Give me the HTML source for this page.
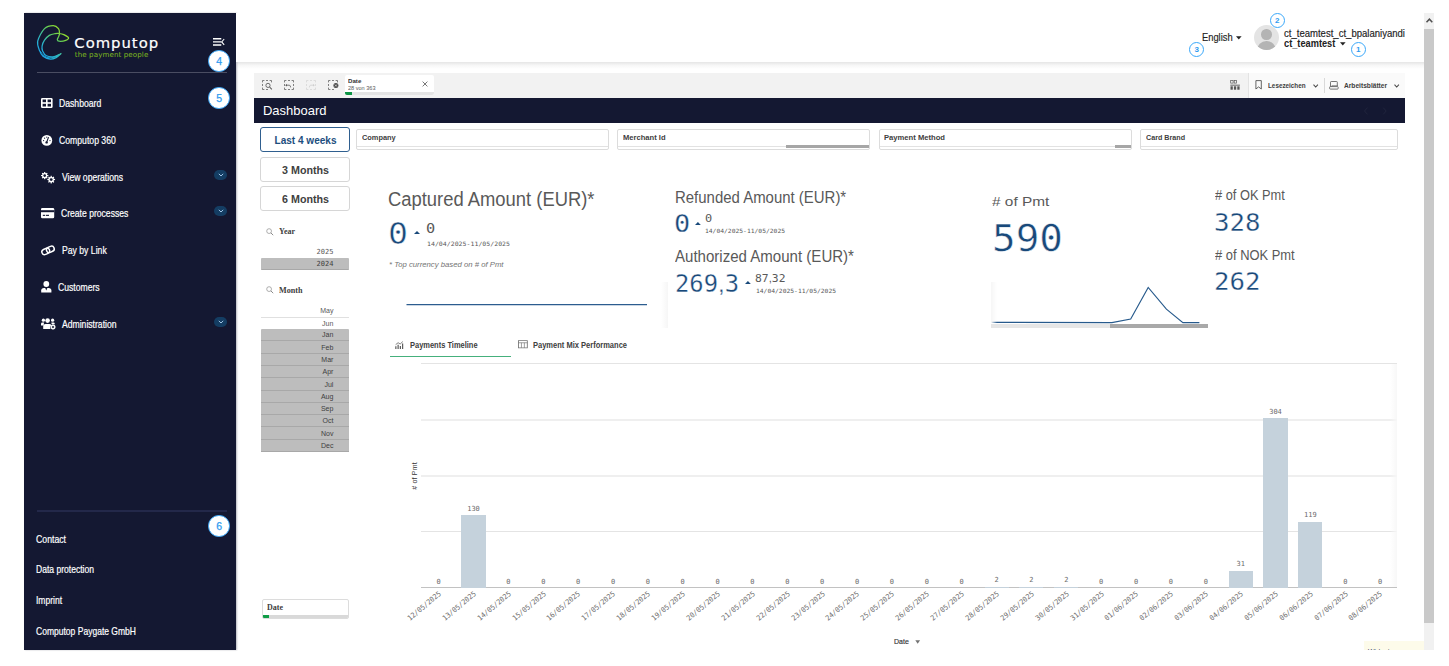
<!DOCTYPE html>
<html lang="en"><head><meta charset="utf-8"><title>Computop Dashboard</title>
<style>
*{box-sizing:border-box;margin:0;padding:0}
html,body{width:1449px;height:666px;overflow:hidden;background:#fff}
body{position:relative;font-family:"Liberation Sans",sans-serif;color:#333}
.abs{position:absolute}
svg{position:absolute;overflow:visible}
#side{position:absolute;left:24px;top:13px;width:212px;height:637px;background:#141832;box-shadow:1px 0 1.5px rgba(20,24,50,.3)}
.badge{position:absolute;border-radius:50%;background:#fff;border:1.1px solid #3aa8fa;color:#2f9bf0;text-align:center;font-family:"Liberation Sans",sans-serif}
.chev{position:absolute;left:213px;width:13px;height:10px;border-radius:5px;background:#143d63}
#hdr{position:absolute;left:236px;top:13px;width:1188px;height:49px;background:#fff}
#hsh{position:absolute;left:237px;top:62px;width:1187px;height:7px;background:linear-gradient(180deg,rgba(0,0,0,.10),rgba(0,0,0,.035) 45%,rgba(0,0,0,0))}
#sb{position:absolute;left:1424px;top:13px;width:10px;height:637px;background:#f1f1f1}
#sb .th{position:absolute;left:0;top:16px;width:10px;height:594px;background:#c9c9c9}
#tb{position:absolute;left:254px;top:73px;width:1151px;height:25px;background:#f2f2f2}
#ttl{position:absolute;left:254px;top:98px;width:1151px;height:25px;background:#141832}
.btn{position:absolute;left:260px;width:90px;height:24.5px;border:1px solid #d4d4d4;border-radius:3px;background:#fff}
.fbox{position:absolute;top:129px;height:20.5px;border:1px solid #dcdcdc;border-radius:2px;background:#fff}
.mono{font-family:"DejaVu Sans Mono","Liberation Mono",monospace}
.serif{font-family:"Liberation Serif",serif}
</style></head><body>

<div id="side"></div>
<div class="abs" style="left:36.5px;top:72px;width:190px;height:1px;background:#4a4d62"></div>
<span id="t1" style="position:absolute;display:inline-block;left:59.3px;top:96.10px;height:14px;line-height:14px;font-size:10.5px;white-space:nowrap;transform:scaleX(0.8234);transform-origin:left center;color:#fff;-webkit-text-stroke:0.2px #fff;">Dashboard</span>
<span id="t2" style="position:absolute;display:inline-block;left:59.3px;top:133.10px;height:14px;line-height:14px;font-size:10.5px;white-space:nowrap;transform:scaleX(0.8245);transform-origin:left center;color:#fff;-webkit-text-stroke:0.2px #fff;">Computop 360</span>
<span id="t3" style="position:absolute;display:inline-block;left:62.2px;top:170.30px;height:14px;line-height:14px;font-size:10.5px;white-space:nowrap;transform:scaleX(0.8184);transform-origin:left center;color:#fff;-webkit-text-stroke:0.2px #fff;">View operations</span>
<span id="t4" style="position:absolute;display:inline-block;left:61px;top:205.80px;height:14px;line-height:14px;font-size:10.5px;white-space:nowrap;transform:scaleX(0.8178);transform-origin:left center;color:#fff;-webkit-text-stroke:0.2px #fff;">Create processes</span>
<span id="t5" style="position:absolute;display:inline-block;left:62.2px;top:243.00px;height:14px;line-height:14px;font-size:10.5px;white-space:nowrap;transform:scaleX(0.8235);transform-origin:left center;color:#fff;-webkit-text-stroke:0.2px #fff;">Pay by Link</span>
<span id="t6" style="position:absolute;display:inline-block;left:58.1px;top:280.00px;height:14px;line-height:14px;font-size:10.5px;white-space:nowrap;transform:scaleX(0.8195);transform-origin:left center;color:#fff;-webkit-text-stroke:0.2px #fff;">Customers</span>
<span id="t7" style="position:absolute;display:inline-block;left:62.2px;top:317.00px;height:14px;line-height:14px;font-size:10.5px;white-space:nowrap;transform:scaleX(0.8192);transform-origin:left center;color:#fff;-webkit-text-stroke:0.2px #fff;">Administration</span>
<div class="chev" style="left:214px;top:169.7px"></div>
<svg style="left:217.5px;top:172.7px" width="6" height="4" viewBox="0 0 6 4"><path d="M0.8 0.8 L3 3 L5.2 0.8" fill="none" stroke="#9fc4e6" stroke-width="1"/></svg>
<div class="chev" style="left:214px;top:206.2px"></div>
<svg style="left:217.5px;top:209.2px" width="6" height="4" viewBox="0 0 6 4"><path d="M0.8 0.8 L3 3 L5.2 0.8" fill="none" stroke="#9fc4e6" stroke-width="1"/></svg>
<div class="chev" style="left:214px;top:317.2px"></div>
<svg style="left:217.5px;top:320.2px" width="6" height="4" viewBox="0 0 6 4"><path d="M0.8 0.8 L3 3 L5.2 0.8" fill="none" stroke="#9fc4e6" stroke-width="1"/></svg>
<div class="abs" style="left:36.5px;top:510px;width:190px;height:2px;background:#23284a"></div>
<span id="t8" style="position:absolute;display:inline-block;left:35.9px;top:531.50px;height:14px;line-height:14px;font-size:10.5px;white-space:nowrap;transform:scaleX(0.8290);transform-origin:left center;color:#fff;-webkit-text-stroke:0.2px #fff;">Contact</span>
<span id="t9" style="position:absolute;display:inline-block;left:35.9px;top:561.50px;height:14px;line-height:14px;font-size:10.5px;white-space:nowrap;transform:scaleX(0.8144);transform-origin:left center;color:#fff;-webkit-text-stroke:0.2px #fff;">Data protection</span>
<span id="t10" style="position:absolute;display:inline-block;left:35.9px;top:592.50px;height:14px;line-height:14px;font-size:10.5px;white-space:nowrap;transform:scaleX(0.8101);transform-origin:left center;color:#fff;-webkit-text-stroke:0.2px #fff;">Imprint</span>
<span id="t11" style="position:absolute;display:inline-block;left:35.9px;top:623.50px;height:14px;line-height:14px;font-size:10.5px;white-space:nowrap;transform:scaleX(0.8120);transform-origin:left center;color:#fff;-webkit-text-stroke:0.2px #fff;">Computop Paygate GmbH</span>
<div class="badge" style="left:208.4px;top:50.2px;width:21.4px;height:21.4px;line-height:21.6px;font-size:10.5px;-webkit-text-stroke:0.25px #2f9bf0">4</div>
<div class="badge" style="left:208.4px;top:87.3px;width:21.4px;height:21.4px;line-height:21.6px;font-size:10.5px;-webkit-text-stroke:0.25px #2f9bf0">5</div>
<div class="badge" style="left:208.4px;top:515.3px;width:21.4px;height:21.4px;line-height:21.6px;font-size:10.5px;-webkit-text-stroke:0.25px #2f9bf0">6</div>
<svg style="left:36px;top:24px" width="34" height="36" viewBox="0 0 34 36">
<defs><linearGradient id="lg" gradientUnits="userSpaceOnUse" x1="4" y1="33" x2="30" y2="7"><stop offset="0" stop-color="#16a0ee"/><stop offset="0.35" stop-color="#2db6c6"/><stop offset="0.7" stop-color="#62cc55"/><stop offset="1" stop-color="#a2e222"/></linearGradient></defs>
<path d="M24.90 29.70 C24.10 30.35 21.87 32.70 20.10 33.60 C18.33 34.50 16.48 35.33 14.30 35.10 C12.12 34.87 8.77 33.57 7.00 32.20 C5.23 30.83 4.58 29.40 3.70 26.90 C2.82 24.40 0.90 20.92 1.70 17.20 C2.50 13.48 5.92 7.22 8.50 4.60 C11.08 1.98 14.87 1.50 17.20 1.50 C19.53 1.50 21.45 3.27 22.50 4.60 C23.55 5.93 23.48 8.17 23.50 9.50 C23.52 10.83 22.97 11.58 22.60 12.60 C22.23 13.62 21.23 14.83 21.30 15.60 C21.37 16.37 21.60 17.07 23.00 17.20 C24.40 17.33 28.12 16.97 29.70 16.40 C31.28 15.83 32.82 14.77 32.50 13.80 C32.18 12.83 29.30 11.32 27.80 10.60 C26.30 9.88 24.95 9.66 23.50 9.50 C22.05 9.34 20.80 9.33 19.10 9.65 C17.40 9.97 15.07 10.31 13.30 11.40 C11.53 12.49 9.70 14.43 8.50 16.20 C7.30 17.97 6.42 20.22 6.10 22.00 C5.78 23.78 5.88 25.28 6.60 26.90 C7.32 28.52 8.47 30.75 10.40 31.70 C12.33 32.65 15.78 32.93 18.20 32.60 C20.62 32.27 23.78 30.18 24.90 29.70" fill="none" stroke="url(#lg)" stroke-width="1.25" stroke-linejoin="round" stroke-linecap="round"/>
<path d="M4.60 27.50 C5.17 28.22 6.60 30.75 8.00 31.80 C9.40 32.85 11.17 33.62 13.00 33.80 C14.83 33.98 17.02 33.58 19.00 32.90 C20.98 32.22 23.92 30.23 24.90 29.70" fill="none" stroke="url(#lg)" stroke-width="0.9" stroke-linecap="round"/>
</svg>
<span id="logo1" style="position:absolute;left:74.3px;top:32.9px;font-family:'DejaVu Sans','Liberation Sans',sans-serif;font-size:14.8px;line-height:20px;color:#fff;white-space:nowrap;letter-spacing:1px;-webkit-text-stroke:0.2px #fff">Computop</span>
<span id="logo2" style="position:absolute;left:74.8px;top:50.1px;font-family:'DejaVu Sans','Liberation Sans',sans-serif;font-size:7.1px;line-height:10px;color:#7fba1f;white-space:nowrap;letter-spacing:0.1px">the payment people</span>
<svg style="left:213px;top:38px" width="12" height="8" viewBox="0 0 12 8"><path d="M0 0.8 H8.3 M0 3.9 H8.3 M0 7 H8.3" stroke="#fff" stroke-width="1.4"/><path d="M11.2 1 L8.7 3.9 L11.2 6.8" fill="none" stroke="#fff" stroke-width="1.1"/></svg>
<svg style="left:41px;top:98px" width="12" height="10" viewBox="0 0 12 10"><rect x="0" y="0" width="11.6" height="10" rx="1.3" fill="#fff"/><rect x="1.6" y="1.5" width="3.4" height="2.7" fill="#141832"/><rect x="6.6" y="1.5" width="3.4" height="2.7" fill="#141832"/><rect x="1.6" y="5.8" width="3.4" height="2.7" fill="#141832"/><rect x="6.6" y="5.8" width="3.4" height="2.7" fill="#141832"/></svg>
<svg style="left:41px;top:135px" width="12" height="11" viewBox="0 0 12 11"><circle cx="5.8" cy="5.4" r="5.4" fill="#fff"/><path d="M5.6 7.4 L7.4 2.6" stroke="#141832" stroke-width="1.1" stroke-linecap="round"/><circle cx="5.6" cy="7.4" r="1.2" fill="#141832"/><circle cx="2.6" cy="5.6" r="0.6" fill="#141832"/><circle cx="3.6" cy="3.2" r="0.6" fill="#141832"/><circle cx="9" cy="5.6" r="0.6" fill="#141832"/><circle cx="5.8" cy="2.2" r="0.6" fill="#141832"/></svg>
<svg style="left:41px;top:171.5px" width="15" height="12" viewBox="0 0 15 12"><path d="M7.37 3.12 L7.37 4.08 L6.27 4.29 L6.01 4.93 L6.63 5.86 L5.96 6.53 L5.03 5.91 L4.39 6.17 L4.18 7.27 L3.22 7.27 L3.01 6.17 L2.37 5.91 L1.44 6.53 L0.77 5.86 L1.39 4.93 L1.13 4.29 L0.03 4.08 L0.03 3.12 L1.13 2.91 L1.39 2.27 L0.77 1.34 L1.44 0.67 L2.37 1.29 L3.01 1.03 L3.22 -0.07 L4.18 -0.07 L4.39 1.03 L5.03 1.29 L5.96 0.67 L6.63 1.34 L6.01 2.27 L6.27 2.91 Z" fill="#fff"/><circle cx="3.7" cy="3.6" r="1.3" fill="#141832"/><path d="M14.07 7.09 L14.07 8.11 L12.91 8.33 L12.63 9.00 L13.29 9.98 L12.58 10.69 L11.60 10.03 L10.93 10.31 L10.71 11.47 L9.69 11.47 L9.47 10.31 L8.80 10.03 L7.82 10.69 L7.11 9.98 L7.77 9.00 L7.49 8.33 L6.33 8.11 L6.33 7.09 L7.49 6.87 L7.77 6.20 L7.11 5.22 L7.82 4.51 L8.80 5.17 L9.47 4.89 L9.69 3.73 L10.71 3.73 L10.93 4.89 L11.60 5.17 L12.58 4.51 L13.29 5.22 L12.63 6.20 L12.91 6.87 Z" fill="#fff"/><circle cx="10.2" cy="7.6" r="1.4" fill="#141832"/></svg>
<svg style="left:40.8px;top:208px" width="14" height="11" viewBox="0 0 14 11"><rect x="0" y="0" width="13.2" height="10.2" rx="1.3" fill="#fff"/><rect x="0" y="2.2" width="13.2" height="2" fill="#141832"/><rect x="1.8" y="6.8" width="2.2" height="1.1" fill="#141832"/><rect x="4.8" y="6.8" width="3.2" height="1.1" fill="#141832"/></svg>
<svg style="left:41px;top:244.5px" width="15" height="11" viewBox="0 0 15 11"><g fill="none" stroke="#fff" stroke-width="1.5" transform="rotate(-24 7 5.5)"><rect x="0.6" y="2.7" width="8" height="5.4" rx="2.7"/><rect x="5.6" y="2.7" width="8" height="5.4" rx="2.7"/></g></svg>
<svg style="left:40.6px;top:281.2px" width="11" height="12" viewBox="0 0 11 12"><circle cx="5.3" cy="3" r="2.9" fill="#fff"/><path d="M0.2 11.4 V9.6 Q0.2 6.9 3 6.9 H7.6 Q10.4 6.9 10.4 9.6 V11.4 Z" fill="#fff"/><path d="M4.2 6.9 L5.3 9.6 L6.4 6.9" fill="#141832"/></svg>
<svg style="left:40.6px;top:317.6px" width="15" height="12" viewBox="0 0 15 12"><circle cx="2.4" cy="2.2" r="1.6" fill="#fff"/><circle cx="6.6" cy="2.6" r="2.3" fill="#fff"/><circle cx="11.6" cy="2.2" r="1.6" fill="#fff"/><path d="M0 7.6 V6 Q0 4.6 1.4 4.6 H3.2 Q2.6 5.6 2.8 7.6 Z" fill="#fff"/><path d="M2.2 11 V8.6 Q2.2 6 4.6 6 H8.4 Q10 6 10.2 7.2 L9 9 L9.4 11 Z" fill="#fff"/><path d="M10.4 4.6 H12.4 Q13.8 4.6 13.8 6 V6.2 H10.6 Z" fill="#fff"/><path d="M14.88 8.62 L14.88 9.38 L14.02 9.54 L13.81 10.04 L14.30 10.77 L13.77 11.30 L13.04 10.81 L12.54 11.02 L12.38 11.88 L11.62 11.88 L11.46 11.02 L10.96 10.81 L10.23 11.30 L9.70 10.77 L10.19 10.04 L9.98 9.54 L9.12 9.38 L9.12 8.62 L9.98 8.46 L10.19 7.96 L9.70 7.23 L10.23 6.70 L10.96 7.19 L11.46 6.98 L11.62 6.12 L12.38 6.12 L12.54 6.98 L13.04 7.19 L13.77 6.70 L14.30 7.23 L13.81 7.96 L14.02 8.46 Z" fill="#fff"/><circle cx="12" cy="9" r="1" fill="#141832"/></svg>
<div id="hdr"></div><div id="hsh"></div>
<div id="sb"><div class="th"></div></div>
<div id="tb"></div>
<div id="ttl"></div>
<span id="t12" style="position:absolute;display:inline-block;left:263.4px;top:102.00px;height:17px;line-height:17px;font-size:13px;white-space:nowrap;transform:scaleX(0.9983);transform-origin:left center;color:#fff;">Dashboard</span>
<span id="t13" style="position:absolute;display:inline-block;left:1201.7px;top:31.20px;height:13px;line-height:13px;font-size:10px;white-space:nowrap;transform:scaleX(0.9326);transform-origin:left center;color:#222;-webkit-text-stroke:0.15px #222;">English</span>
<span id="t14" style="position:absolute;display:inline-block;left:1284.3px;top:26.50px;height:13px;line-height:13px;font-size:10px;white-space:nowrap;transform:scaleX(0.9546);transform-origin:left center;color:#222;-webkit-text-stroke:0.15px #222;">ct_teamtest_ct_bpalaniyandi</span>
<span id="t15" style="position:absolute;display:inline-block;left:1284.3px;top:36.80px;height:13px;line-height:13px;font-size:10px;white-space:nowrap;transform:scaleX(0.9228);transform-origin:left center;color:#222;font-weight:bold;">ct_teamtest</span>
<div class="abs" style="left:1254px;top:25.3px;width:24.8px;height:24.8px;border-radius:50%;background:#e4e4e4;overflow:hidden"><div class="abs" style="left:7.2px;top:4px;width:10.4px;height:10.4px;border-radius:50%;background:#b4b4b4"></div><div class="abs" style="left:3px;top:15.4px;width:18.8px;height:14px;border-radius:9.4px 9.4px 0 0;background:#b4b4b4"></div></div>
<div class="badge" style="left:1269.8px;top:12.899999999999999px;width:15px;height:15px;line-height:13px;font-size:8px;font-weight:bold">2</div>
<div class="badge" style="left:1350.7px;top:42.3px;width:15px;height:15px;line-height:13px;font-size:8px;font-weight:bold">1</div>
<div class="badge" style="left:1189.2px;top:42.3px;width:15px;height:15px;line-height:13px;font-size:8px;font-weight:bold">3</div>
<svg style="left:1235.7px;top:36.4px" width="6" height="4" viewBox="0 0 6 4"><path d="M0 0.3 H5.6 L2.8 3.4 Z" fill="#222"/></svg>
<svg style="left:1339.6px;top:41.8px" width="6" height="4" viewBox="0 0 6 4"><path d="M0 0.3 H5.6 L2.8 3.4 Z" fill="#222"/></svg>
<svg style="left:1425.6px;top:17.6px" width="7" height="5" viewBox="0 0 7 5"><path d="M0.5 4.2 L3.4 1.2 L6.3 4.2" fill="none" stroke="#505050" stroke-width="1.5"/></svg>
<div class="abs" style="left:1248px;top:73px;width:157px;height:25px;background:#fafafa;border-left:1px solid #e3e3e3"></div>
<svg style="left:262px;top:80px" width="10" height="10" viewBox="0 0 10 10"><path d="M0.5 2.4 V0.5 H2.4 M4 0.5 H6 M7.6 0.5 H9.5 V2.4 M6 9.5 H4 M2.4 9.5 H0.5 V7.6 M0.5 6 V4" fill="none" stroke="#5a5a5a" stroke-width="0.75"/><circle cx="6" cy="5.4" r="2.1" fill="none" stroke="#5a5a5a" stroke-width="0.85"/><path d="M7.6 7 L9.8 9.4" stroke="#5a5a5a" stroke-width="1.1"/></svg>
<svg style="left:284px;top:80px" width="10" height="10" viewBox="0 0 10 10"><path d="M0.5 2.4 V0.5 H2.4 M4 0.5 H6 M7.6 0.5 H9.5 V2.4 M9.5 4 V6 M9.5 7.6 V9.5 H7.6 M6 9.5 H4 M2.4 9.5 H0.5 V7.6 M0.5 6 V4" fill="none" stroke="#5a5a5a" stroke-width="0.75"/><path d="M2 5.2 H5.2 Q6.6 5.2 6.6 7.4" fill="none" stroke="#5a5a5a" stroke-width="0.8"/><path d="M1.2 5.2 L3 3.9 V6.5 Z" fill="#5a5a5a"/></svg>
<svg style="left:306px;top:80px" width="10" height="10" viewBox="0 0 10 10"><path d="M0.5 2.4 V0.5 H2.4 M4 0.5 H6 M7.6 0.5 H9.5 V2.4 M9.5 4 V6 M9.5 7.6 V9.5 H7.6 M6 9.5 H4 M2.4 9.5 H0.5 V7.6 M0.5 6 V4" fill="none" stroke="#d4d4d4" stroke-width="0.75"/><path d="M8 5.2 H4.8 Q3.4 5.2 3.4 7.4" fill="none" stroke="#cfcfcf" stroke-width="0.8"/><path d="M8.8 5.2 L7 3.9 V6.5 Z" fill="#cfcfcf"/></svg>
<svg style="left:328px;top:80px" width="10" height="10" viewBox="0 0 10 10"><path d="M0.5 2.4 V0.5 H2.4 M4 0.5 H6 M7.6 0.5 H9.5 V2.4 M6 9.5 H4 M2.4 9.5 H0.5 V7.6 M0.5 6 V4" fill="none" stroke="#5a5a5a" stroke-width="0.75"/><circle cx="7.9" cy="5.5" r="2.5" fill="#4a4a4a"/><path d="M6.9 4.5 L8.9 6.5 M8.9 4.5 L6.9 6.5" stroke="#f2f2f2" stroke-width="0.7"/></svg>
<div class="abs" style="left:345px;top:75px;width:89.2px;height:20px;background:#fff;border-radius:2px;overflow:hidden"><div class="abs" style="left:0;bottom:0;width:100%;height:3px;background:#e4e4e4"></div><div class="abs" style="left:0;bottom:0;width:7.1px;height:3px;background:#0c9444"></div></div>
<span id="t16" style="position:absolute;display:inline-block;left:347.7px;top:77.20px;height:8px;line-height:8px;font-size:6.2px;white-space:nowrap;transform:scaleX(0.9909);transform-origin:left center;color:#333;font-weight:bold;">Date</span>
<span id="t17" style="position:absolute;display:inline-block;left:347.7px;top:84.40px;height:8px;line-height:8px;font-size:5.8px;white-space:nowrap;transform:scaleX(0.9586);transform-origin:left center;color:#595959;">28 von 363</span>
<svg style="left:422px;top:80.8px" width="6" height="6" viewBox="0 0 6 6"><path d="M0.6 0.6 L5.4 5.4 M5.4 0.6 L0.6 5.4" stroke="#555" stroke-width="0.8"/></svg>
<svg style="left:1230px;top:80px" width="10" height="10" viewBox="0 0 10 10"><rect x="0.7" y="0.5" width="2.4" height="2.6" fill="none" stroke="#555" stroke-width="0.7"/><rect x="4.2" y="0.5" width="2.4" height="2.6" fill="none" stroke="#555" stroke-width="0.7"/><rect x="0.3" y="4.7" width="9.6" height="0.9" fill="#555"/><rect x="0.5" y="6.3" width="2.3" height="3.4" fill="#555"/><rect x="3.9" y="6.3" width="2.3" height="3.4" fill="#555"/><rect x="7.3" y="6.3" width="2.3" height="3.4" fill="#555"/></svg>
<svg style="left:1255px;top:80px" width="8" height="10" viewBox="0 0 8 10"><path d="M0.9 0.6 H6.3 V9 L3.6 6.9 L0.9 9 Z" fill="none" stroke="#555" stroke-width="0.9"/></svg>
<span id="t18" style="position:absolute;display:inline-block;left:1268.4px;top:80.80px;height:9px;line-height:9px;font-size:7px;white-space:nowrap;transform:scaleX(0.9030);transform-origin:left center;color:#404040;font-weight:bold;">Lesezeichen</span>
<svg style="left:1313px;top:83.6px" width="6" height="4" viewBox="0 0 6 4"><path d="M0.5 0.6 L2.7 3 L4.9 0.6" fill="none" stroke="#4a4a4a" stroke-width="1.05"/></svg>
<div class="abs" style="left:1324px;top:78px;width:1px;height:14.5px;background:#d9d9d9"></div>
<svg style="left:1329px;top:81px" width="10" height="9" viewBox="0 0 10 9"><path d="M1.5 5.6 V1.2 Q1.5 0.5 2.2 0.5 H7.6 Q8.3 0.5 8.3 1.2 V5" fill="none" stroke="#555" stroke-width="0.8"/><rect x="0.6" y="5.6" width="8.6" height="2.5" rx="0.8" fill="none" stroke="#555" stroke-width="0.8"/><path d="M2.8 5.6 V4.8 H8.6" fill="none" stroke="#555" stroke-width="0.7"/></svg>
<span id="t19" style="position:absolute;display:inline-block;left:1344.4px;top:80.80px;height:9px;line-height:9px;font-size:7px;white-space:nowrap;transform:scaleX(0.9469);transform-origin:left center;color:#404040;font-weight:bold;">Arbeitsblätter</span>
<svg style="left:1393.8px;top:83.6px" width="6" height="4" viewBox="0 0 6 4"><path d="M0.5 0.6 L2.7 3 L4.9 0.6" fill="none" stroke="#4a4a4a" stroke-width="1.05"/></svg>
<svg style="left:1363px;top:107px" width="26" height="8" viewBox="0 0 26 8"><path d="M4.5 0.6 L1.5 4 L4.5 7.4 M20.2 0.6 L23.2 4 L20.2 7.4" fill="none" stroke="#20243d" stroke-width="1"/></svg>
<div class="btn" style="top:127.3px;border-color:#2f5f8f"></div>
<div style="position:absolute;left:155.2px;width:300px;text-align:center;top:132.70px;height:15px;line-height:15px;font-size:11.2px;white-space:nowrap;color:#1d4e7e;font-weight:bold;"><span id="t20" style="display:inline-block;transform:scaleX(0.8979);transform-origin:center center;">Last 4 weeks</span></div>
<div class="btn" style="top:157.3px;border-color:#d6d6d6"></div>
<div style="position:absolute;left:155.2px;width:300px;text-align:center;top:162.70px;height:15px;line-height:15px;font-size:11.2px;white-space:nowrap;color:#404040;font-weight:bold;"><span id="t21" style="display:inline-block;transform:scaleX(0.9570);transform-origin:center center;">3 Months</span></div>
<div class="btn" style="top:186.4px;border-color:#d6d6d6"></div>
<div style="position:absolute;left:155.2px;width:300px;text-align:center;top:191.80px;height:15px;line-height:15px;font-size:11.2px;white-space:nowrap;color:#404040;font-weight:bold;"><span id="t22" style="display:inline-block;transform:scaleX(0.9570);transform-origin:center center;">6 Months</span></div>
<div class="fbox" style="left:356.4px;width:253.10000000000002px"><div class="abs" style="left:0;right:0;bottom:1.5px;height:1px;background:#e2e2e2"></div></div>
<span id="t23" style="position:absolute;display:inline-block;left:361.7px;top:132.80px;height:10px;line-height:10px;font-size:8px;white-space:nowrap;transform:scaleX(0.9245);transform-origin:left center;color:#404040;font-weight:bold;">Company</span>
<div class="fbox" style="left:617.4px;width:253.0px"><div class="abs" style="left:0;right:0;bottom:1.5px;height:1px;background:#e2e2e2"></div><div class="abs" style="left:167.60000000000002px;right:0;bottom:0.2px;height:3px;background:#a6a6a6"></div></div>
<span id="t24" style="position:absolute;display:inline-block;left:622.6999999999999px;top:132.80px;height:10px;line-height:10px;font-size:8px;white-space:nowrap;transform:scaleX(0.9486);transform-origin:left center;color:#404040;font-weight:bold;">Merchant Id</span>
<div class="fbox" style="left:878.5px;width:253.5px"><div class="abs" style="left:0;right:0;bottom:1.5px;height:1px;background:#e2e2e2"></div><div class="abs" style="left:235.5px;right:0;bottom:0.2px;height:3px;background:#a6a6a6"></div></div>
<span id="t25" style="position:absolute;display:inline-block;left:883.8px;top:132.80px;height:10px;line-height:10px;font-size:8px;white-space:nowrap;transform:scaleX(0.9529);transform-origin:left center;color:#404040;font-weight:bold;">Payment Method</span>
<div class="fbox" style="left:1140.2px;width:257.39999999999986px"><div class="abs" style="left:0;right:0;bottom:1.5px;height:1px;background:#e2e2e2"></div></div>
<span id="t26" style="position:absolute;display:inline-block;left:1145.5px;top:132.80px;height:10px;line-height:10px;font-size:8px;white-space:nowrap;transform:scaleX(0.8953);transform-origin:left center;color:#404040;font-weight:bold;">Card Brand</span>
<svg style="left:266px;top:227.5px" width="8" height="8" viewBox="0 0 8 8"><circle cx="3.1" cy="3.1" r="2.4" fill="none" stroke="#8c8c8c" stroke-width="0.7"/><path d="M4.9 4.9 L7.2 7.2" stroke="#8c8c8c" stroke-width="1"/></svg>
<span id="t27" class="serif" style="position:absolute;display:inline-block;left:278.6px;top:225.80px;height:11px;line-height:11px;font-size:8.5px;white-space:nowrap;transform:scaleX(0.9412);transform-origin:left center;color:#404040;font-weight:bold;">Year</span>
<span id="t28" class="mono" style="position:absolute;display:inline-block;right:1115.6px;top:248.10px;height:9px;line-height:9px;font-size:7px;white-space:nowrap;color:#595959;">2025</span>
<div class="abs" style="left:260.6px;top:258.3px;width:88.3px;height:11.3px;background:#bdbdbd;border-bottom:1px solid #a8a8a8;border-radius:1px"></div>
<span id="t29" class="mono" style="position:absolute;display:inline-block;right:1115.6px;top:260.40px;height:9px;line-height:9px;font-size:7px;white-space:nowrap;color:#404040;">2024</span>
<svg style="left:266px;top:286.3px" width="8" height="8" viewBox="0 0 8 8"><circle cx="3.1" cy="3.1" r="2.4" fill="none" stroke="#8c8c8c" stroke-width="0.7"/><path d="M4.9 4.9 L7.2 7.2" stroke="#8c8c8c" stroke-width="1"/></svg>
<span id="t30" class="serif" style="position:absolute;display:inline-block;left:278.6px;top:284.50px;height:11px;line-height:11px;font-size:8.5px;white-space:nowrap;transform:scaleX(0.9567);transform-origin:left center;color:#404040;font-weight:bold;">Month</span>
<div class="abs" style="left:260.6px;top:329.1px;width:88.3px;height:122.8px;background:#bdbdbd;border-radius:1px"></div>
<div class="abs" style="left:260.6px;top:316.8px;width:88.3px;height:1px;background:#e0e0e0"></div>
<span id="t31" style="position:absolute;display:inline-block;right:1115.6px;top:305.84px;height:9px;line-height:9px;font-size:7px;white-space:nowrap;color:#595959;">May</span>
<span id="t32" style="position:absolute;display:inline-block;right:1115.6px;top:318.72px;height:9px;line-height:9px;font-size:7px;white-space:nowrap;color:#595959;">Jun</span>
<div class="abs" style="left:260.6px;top:340.3px;width:88.3px;height:1px;background:#a8a8a8"></div>
<span id="t33" style="position:absolute;display:inline-block;right:1115.6px;top:330.40px;height:9px;line-height:9px;font-size:7px;white-space:nowrap;color:#404040;">Jan</span>
<div class="abs" style="left:260.6px;top:352.6px;width:88.3px;height:1px;background:#a8a8a8"></div>
<span id="t34" style="position:absolute;display:inline-block;right:1115.6px;top:342.68px;height:9px;line-height:9px;font-size:7px;white-space:nowrap;color:#404040;">Feb</span>
<div class="abs" style="left:260.6px;top:364.9px;width:88.3px;height:1px;background:#a8a8a8"></div>
<span id="t35" style="position:absolute;display:inline-block;right:1115.6px;top:354.96px;height:9px;line-height:9px;font-size:7px;white-space:nowrap;color:#404040;">Mar</span>
<div class="abs" style="left:260.6px;top:377.2px;width:88.3px;height:1px;background:#a8a8a8"></div>
<span id="t36" style="position:absolute;display:inline-block;right:1115.6px;top:367.24px;height:9px;line-height:9px;font-size:7px;white-space:nowrap;color:#404040;">Apr</span>
<div class="abs" style="left:260.6px;top:389.5px;width:88.3px;height:1px;background:#a8a8a8"></div>
<span id="t37" style="position:absolute;display:inline-block;right:1115.6px;top:379.52px;height:9px;line-height:9px;font-size:7px;white-space:nowrap;color:#404040;">Jul</span>
<div class="abs" style="left:260.6px;top:401.7px;width:88.3px;height:1px;background:#a8a8a8"></div>
<span id="t38" style="position:absolute;display:inline-block;right:1115.6px;top:391.80px;height:9px;line-height:9px;font-size:7px;white-space:nowrap;color:#404040;">Aug</span>
<div class="abs" style="left:260.6px;top:414.0px;width:88.3px;height:1px;background:#a8a8a8"></div>
<span id="t39" style="position:absolute;display:inline-block;right:1115.6px;top:404.08px;height:9px;line-height:9px;font-size:7px;white-space:nowrap;color:#404040;">Sep</span>
<div class="abs" style="left:260.6px;top:426.3px;width:88.3px;height:1px;background:#a8a8a8"></div>
<span id="t40" style="position:absolute;display:inline-block;right:1115.6px;top:416.36px;height:9px;line-height:9px;font-size:7px;white-space:nowrap;color:#404040;">Oct</span>
<div class="abs" style="left:260.6px;top:438.6px;width:88.3px;height:1px;background:#a8a8a8"></div>
<span id="t41" style="position:absolute;display:inline-block;right:1115.6px;top:428.64px;height:9px;line-height:9px;font-size:7px;white-space:nowrap;color:#404040;">Nov</span>
<div class="abs" style="left:260.6px;top:450.9px;width:88.3px;height:1px;background:#a8a8a8"></div>
<span id="t42" style="position:absolute;display:inline-block;right:1115.6px;top:440.92px;height:9px;line-height:9px;font-size:7px;white-space:nowrap;color:#404040;">Dec</span>
<div class="abs" style="left:261.5px;top:598.7px;width:87px;height:20.7px;border:1px solid #dcdcdc;border-radius:2px;background:#fff;overflow:hidden"><div class="abs" style="left:0;right:0;bottom:0;height:3px;background:#d9d9d9"></div><div class="abs" style="left:0;bottom:0;width:6.3px;height:3px;background:#0f9d46"></div></div>
<span id="t43" class="serif" style="position:absolute;display:inline-block;left:267px;top:601.80px;height:11px;line-height:11px;font-size:8.5px;white-space:nowrap;transform:scaleX(0.9412);transform-origin:left center;color:#404040;font-weight:bold;">Date</span>
<span id="t44" style="position:absolute;display:inline-block;left:388.3px;top:187.00px;height:25px;line-height:25px;font-size:19.5px;white-space:nowrap;transform:scaleX(0.9432);transform-origin:left center;color:#595959;">Captured Amount (EUR)*</span>
<span id="t45" class="mono" style="position:absolute;display:inline-block;left:387.6px;top:214.10px;height:39px;line-height:39px;font-size:30px;white-space:nowrap;transform:scaleX(1.1073);transform-origin:left center;color:#19497a;-webkit-text-stroke:0.5px #fff;">0</span>
<svg style="left:413.8px;top:231.2px" width="6.0" height="3.0" viewBox="0 0 6.0 3.0"><path d="M0 3.0 L3.0 0 L6.0 3.0 Z" fill="#19497a"/></svg>
<span id="t46" class="mono" style="position:absolute;display:inline-block;left:426.4px;top:219.20px;height:18px;line-height:18px;font-size:14px;white-space:nowrap;transform:scaleX(1.0904);transform-origin:left center;color:#595959;">0</span>
<span id="t47" class="mono" style="position:absolute;display:inline-block;left:427.2px;top:239.60px;height:8px;line-height:8px;font-size:6px;white-space:nowrap;transform:scaleX(1.0941);transform-origin:left center;color:#595959;">14/04/2025-11/05/2025</span>
<span id="t48" style="position:absolute;display:inline-block;left:388.5px;top:259.90px;height:10px;line-height:10px;font-size:8px;white-space:nowrap;transform:scaleX(0.9668);transform-origin:left center;color:#737373;font-style:italic;">* Top currency based on # of Pmt</span>
<svg style="left:406px;top:302px" width="242" height="6" viewBox="406 302 242 6"><path d="M406.5 304.6 H647" stroke="#2c5d8f" stroke-width="1.2"/></svg>
<span id="t49" style="position:absolute;display:inline-block;left:675px;top:187.10px;height:21px;line-height:21px;font-size:16.2px;white-space:nowrap;transform:scaleX(0.9236);transform-origin:left center;color:#595959;">Refunded Amount (EUR)*</span>
<span id="t50" class="mono" style="position:absolute;display:inline-block;left:674px;top:209.00px;height:31px;line-height:31px;font-size:24px;white-space:nowrap;transform:scaleX(1.1209);transform-origin:left center;color:#19497a;-webkit-text-stroke:0.3px #fff;">0</span>
<svg style="left:695.0px;top:221.55px" width="5.8" height="2.9" viewBox="0 0 5.8 2.9"><path d="M0 2.9 L2.9 0 L5.8 2.9 Z" fill="#19497a"/></svg>
<span id="t51" class="mono" style="position:absolute;display:inline-block;left:704.8px;top:212.20px;height:14px;line-height:14px;font-size:11px;white-space:nowrap;transform:scaleX(1.0868);transform-origin:left center;color:#595959;">0</span>
<span id="t52" class="mono" style="position:absolute;display:inline-block;left:705.3px;top:227.40px;height:8px;line-height:8px;font-size:5.8px;white-space:nowrap;transform:scaleX(1.0915);transform-origin:left center;color:#595959;">14/04/2025-11/05/2025</span>
<span id="t53" style="position:absolute;display:inline-block;left:675px;top:245.70px;height:21px;line-height:21px;font-size:16.2px;white-space:nowrap;transform:scaleX(0.9296);transform-origin:left center;color:#595959;">Authorized Amount (EUR)*</span>
<span id="t54" class="mono" style="position:absolute;display:inline-block;left:674.6px;top:267.70px;height:31px;line-height:31px;font-size:24px;white-space:nowrap;transform:scaleX(0.9925);transform-origin:left center;color:#19497a;-webkit-text-stroke:0.3px #fff;">269<span style="font-family:Liberation Sans,sans-serif">,</span>3</span>
<svg style="left:744.6px;top:280.55px" width="5.8" height="2.9" viewBox="0 0 5.8 2.9"><path d="M0 2.9 L2.9 0 L5.8 2.9 Z" fill="#19497a"/></svg>
<span id="t55" class="mono" style="position:absolute;display:inline-block;left:755.2px;top:271.40px;height:14px;line-height:14px;font-size:11px;white-space:nowrap;transform:scaleX(1.0317);transform-origin:left center;color:#595959;">87<span style="font-family:Liberation Sans,sans-serif">,</span>32</span>
<span id="t56" class="mono" style="position:absolute;display:inline-block;left:755.5px;top:286.60px;height:8px;line-height:8px;font-size:5.8px;white-space:nowrap;transform:scaleX(1.0915);transform-origin:left center;color:#595959;">14/04/2025-11/05/2025</span>
<span id="t57" style="position:absolute;display:inline-block;left:991.5px;top:193.20px;height:18px;line-height:18px;font-size:13.6px;white-space:nowrap;transform:scaleX(1.1319);transform-origin:left center;color:#595959;"># of Pmt</span>
<span id="t58" class="mono" style="position:absolute;display:inline-block;left:991.8px;top:214.20px;height:49px;line-height:49px;font-size:37.5px;white-space:nowrap;transform:scaleX(1.0482);transform-origin:left center;color:#19497a;-webkit-text-stroke:0.5px #fff;">590</span>
<div class="abs" style="left:991.4px;top:323.8px;width:120px;height:4.2px;background:#e6e6e6"></div>
<div class="abs" style="left:1110.3px;top:323.8px;width:98px;height:4.2px;background:#a9a9a9"></div>
<svg style="left:991px;top:280px" width="220" height="46" viewBox="991 280 220 46"><path d="M991.4 322.4 L1111.9 322.6 L1130.7 319.1 L1148.2 287.4 L1166.4 309.2 L1182.9 322.6 L1199.4 322.6" fill="none" stroke="#275a8c" stroke-width="1.15"/></svg>
<span id="t59" style="position:absolute;display:inline-block;left:1214.8px;top:187.40px;height:18px;line-height:18px;font-size:13.8px;white-space:nowrap;transform:scaleX(0.9287);transform-origin:left center;color:#595959;"># of OK Pmt</span>
<span id="t60" class="mono" style="position:absolute;display:inline-block;left:1214.4px;top:207.20px;height:32px;line-height:32px;font-size:24.5px;white-space:nowrap;transform:scaleX(1.0505);transform-origin:left center;color:#19497a;-webkit-text-stroke:0.3px #fff;">328</span>
<span id="t61" style="position:absolute;display:inline-block;left:1214.8px;top:246.80px;height:18px;line-height:18px;font-size:13.8px;white-space:nowrap;transform:scaleX(0.9364);transform-origin:left center;color:#595959;"># of NOK Pmt</span>
<span id="t62" class="mono" style="position:absolute;display:inline-block;left:1214.4px;top:265.50px;height:32px;line-height:32px;font-size:24.5px;white-space:nowrap;transform:scaleX(1.0505);transform-origin:left center;color:#19497a;-webkit-text-stroke:0.3px #fff;">262</span>
<div class="abs" style="left:661px;top:282px;width:7px;height:46px;background:linear-gradient(90deg,rgba(255,255,255,0),#f6f6f6)"></div>
<div class="abs" style="left:991px;top:282px;width:6px;height:41px;background:linear-gradient(270deg,rgba(255,255,255,0),#f6f6f6)"></div>
<svg style="left:395.4px;top:340.6px" width="8.6" height="8.6" viewBox="0 0 8 8"><path d="M0.8 7.5 V5 M2.9 7.5 V3.6 M5 7.5 V4.6 M7.1 7.5 V2.4" stroke="#595959" stroke-width="1.1"/><path d="M0.6 3.4 L2.9 1.6 L4.8 2.8 L7.3 0.5" fill="none" stroke="#595959" stroke-width="0.7"/></svg>
<span id="t63" style="position:absolute;display:inline-block;left:410.4px;top:338.90px;height:12px;line-height:12px;font-size:9px;white-space:nowrap;transform:scaleX(0.8307);transform-origin:left center;color:#404040;font-weight:bold;">Payments Timeline</span>
<div class="abs" style="left:389.7px;top:356.4px;width:121.6px;height:1px;background:#45b07c"></div>
<svg style="left:518.3px;top:340px" width="9.8" height="8.5" viewBox="0 0 8 8" preserveAspectRatio="none"><rect x="0.4" y="0.6" width="7.2" height="6.8" fill="none" stroke="#737373" stroke-width="0.7"/><path d="M0.4 2.6 H7.6 M2.8 2.6 V7.4 M5.2 2.6 V7.4" stroke="#737373" stroke-width="0.6"/></svg>
<span id="t64" style="position:absolute;display:inline-block;left:533px;top:338.90px;height:12px;line-height:12px;font-size:9px;white-space:nowrap;transform:scaleX(0.8352);transform-origin:left center;color:#404040;font-weight:bold;">Payment Mix Performance</span>
<div class="abs" style="left:420.5px;top:363px;width:976.5px;height:1px;background:#e4e4e4"></div>
<div class="abs" style="left:420.5px;top:419px;width:976.5px;height:2px;background:#efefef"></div>
<div class="abs" style="left:420.5px;top:475px;width:976.5px;height:2px;background:#efefef"></div>
<div class="abs" style="left:420.5px;top:531px;width:976.5px;height:1px;background:#e4e4e4"></div>
<div class="abs" style="left:420.5px;top:587px;width:976.5px;height:1px;background:#c2c2c2"></div>
<div style="position:absolute;left:288.635px;width:300px;text-align:center;top:576.50px;height:9px;line-height:9px;font-size:7px;white-space:nowrap;color:#6b6b6b;"><span id="t65" class="mono" style="display:inline-block;">0</span></div>
<span class="mono" style="position:absolute;right:1008.8px;top:588.5px;font-size:7.2px;line-height:8px;color:#6b6b6b;white-space:nowrap;transform-origin:100% 50%;transform:rotate(-40deg) scaleX(0.95)">12/05/2025</span>
<div class="abs" style="left:461.4px;top:515.3px;width:24.2px;height:72.7px;background:#c5d2dc"></div>
<div style="position:absolute;left:323.505px;width:300px;text-align:center;top:503.83px;height:9px;line-height:9px;font-size:7px;white-space:nowrap;color:#6b6b6b;"><span id="t66" class="mono" style="display:inline-block;">130</span></div>
<span class="mono" style="position:absolute;right:973.9px;top:588.5px;font-size:7.2px;line-height:8px;color:#6b6b6b;white-space:nowrap;transform-origin:100% 50%;transform:rotate(-40deg) scaleX(0.95)">13/05/2025</span>
<div style="position:absolute;left:358.375px;width:300px;text-align:center;top:576.50px;height:9px;line-height:9px;font-size:7px;white-space:nowrap;color:#6b6b6b;"><span id="t67" class="mono" style="display:inline-block;">0</span></div>
<span class="mono" style="position:absolute;right:939.0px;top:588.5px;font-size:7.2px;line-height:8px;color:#6b6b6b;white-space:nowrap;transform-origin:100% 50%;transform:rotate(-40deg) scaleX(0.95)">14/05/2025</span>
<div style="position:absolute;left:393.245px;width:300px;text-align:center;top:576.50px;height:9px;line-height:9px;font-size:7px;white-space:nowrap;color:#6b6b6b;"><span id="t68" class="mono" style="display:inline-block;">0</span></div>
<span class="mono" style="position:absolute;right:904.2px;top:588.5px;font-size:7.2px;line-height:8px;color:#6b6b6b;white-space:nowrap;transform-origin:100% 50%;transform:rotate(-40deg) scaleX(0.95)">15/05/2025</span>
<div style="position:absolute;left:428.115px;width:300px;text-align:center;top:576.50px;height:9px;line-height:9px;font-size:7px;white-space:nowrap;color:#6b6b6b;"><span id="t69" class="mono" style="display:inline-block;">0</span></div>
<span class="mono" style="position:absolute;right:869.3px;top:588.5px;font-size:7.2px;line-height:8px;color:#6b6b6b;white-space:nowrap;transform-origin:100% 50%;transform:rotate(-40deg) scaleX(0.95)">16/05/2025</span>
<div style="position:absolute;left:462.985px;width:300px;text-align:center;top:576.50px;height:9px;line-height:9px;font-size:7px;white-space:nowrap;color:#6b6b6b;"><span id="t70" class="mono" style="display:inline-block;">0</span></div>
<span class="mono" style="position:absolute;right:834.4px;top:588.5px;font-size:7.2px;line-height:8px;color:#6b6b6b;white-space:nowrap;transform-origin:100% 50%;transform:rotate(-40deg) scaleX(0.95)">17/05/2025</span>
<div style="position:absolute;left:497.855px;width:300px;text-align:center;top:576.50px;height:9px;line-height:9px;font-size:7px;white-space:nowrap;color:#6b6b6b;"><span id="t71" class="mono" style="display:inline-block;">0</span></div>
<span class="mono" style="position:absolute;right:799.5px;top:588.5px;font-size:7.2px;line-height:8px;color:#6b6b6b;white-space:nowrap;transform-origin:100% 50%;transform:rotate(-40deg) scaleX(0.95)">18/05/2025</span>
<div style="position:absolute;left:532.7249999999999px;width:300px;text-align:center;top:576.50px;height:9px;line-height:9px;font-size:7px;white-space:nowrap;color:#6b6b6b;"><span id="t72" class="mono" style="display:inline-block;">0</span></div>
<span class="mono" style="position:absolute;right:764.7px;top:588.5px;font-size:7.2px;line-height:8px;color:#6b6b6b;white-space:nowrap;transform-origin:100% 50%;transform:rotate(-40deg) scaleX(0.95)">19/05/2025</span>
<div style="position:absolute;left:567.595px;width:300px;text-align:center;top:576.50px;height:9px;line-height:9px;font-size:7px;white-space:nowrap;color:#6b6b6b;"><span id="t73" class="mono" style="display:inline-block;">0</span></div>
<span class="mono" style="position:absolute;right:729.8px;top:588.5px;font-size:7.2px;line-height:8px;color:#6b6b6b;white-space:nowrap;transform-origin:100% 50%;transform:rotate(-40deg) scaleX(0.95)">20/05/2025</span>
<div style="position:absolute;left:602.4649999999999px;width:300px;text-align:center;top:576.50px;height:9px;line-height:9px;font-size:7px;white-space:nowrap;color:#6b6b6b;"><span id="t74" class="mono" style="display:inline-block;">0</span></div>
<span class="mono" style="position:absolute;right:694.9px;top:588.5px;font-size:7.2px;line-height:8px;color:#6b6b6b;white-space:nowrap;transform-origin:100% 50%;transform:rotate(-40deg) scaleX(0.95)">21/05/2025</span>
<div style="position:absolute;left:637.335px;width:300px;text-align:center;top:576.50px;height:9px;line-height:9px;font-size:7px;white-space:nowrap;color:#6b6b6b;"><span id="t75" class="mono" style="display:inline-block;">0</span></div>
<span class="mono" style="position:absolute;right:660.1px;top:588.5px;font-size:7.2px;line-height:8px;color:#6b6b6b;white-space:nowrap;transform-origin:100% 50%;transform:rotate(-40deg) scaleX(0.95)">22/05/2025</span>
<div style="position:absolute;left:672.2049999999999px;width:300px;text-align:center;top:576.50px;height:9px;line-height:9px;font-size:7px;white-space:nowrap;color:#6b6b6b;"><span id="t76" class="mono" style="display:inline-block;">0</span></div>
<span class="mono" style="position:absolute;right:625.2px;top:588.5px;font-size:7.2px;line-height:8px;color:#6b6b6b;white-space:nowrap;transform-origin:100% 50%;transform:rotate(-40deg) scaleX(0.95)">23/05/2025</span>
<div style="position:absolute;left:707.0749999999999px;width:300px;text-align:center;top:576.50px;height:9px;line-height:9px;font-size:7px;white-space:nowrap;color:#6b6b6b;"><span id="t77" class="mono" style="display:inline-block;">0</span></div>
<span class="mono" style="position:absolute;right:590.3px;top:588.5px;font-size:7.2px;line-height:8px;color:#6b6b6b;white-space:nowrap;transform-origin:100% 50%;transform:rotate(-40deg) scaleX(0.95)">24/05/2025</span>
<div style="position:absolute;left:741.9449999999999px;width:300px;text-align:center;top:576.50px;height:9px;line-height:9px;font-size:7px;white-space:nowrap;color:#6b6b6b;"><span id="t78" class="mono" style="display:inline-block;">0</span></div>
<span class="mono" style="position:absolute;right:555.5px;top:588.5px;font-size:7.2px;line-height:8px;color:#6b6b6b;white-space:nowrap;transform-origin:100% 50%;transform:rotate(-40deg) scaleX(0.95)">25/05/2025</span>
<div style="position:absolute;left:776.8149999999999px;width:300px;text-align:center;top:576.50px;height:9px;line-height:9px;font-size:7px;white-space:nowrap;color:#6b6b6b;"><span id="t79" class="mono" style="display:inline-block;">0</span></div>
<span class="mono" style="position:absolute;right:520.6px;top:588.5px;font-size:7.2px;line-height:8px;color:#6b6b6b;white-space:nowrap;transform-origin:100% 50%;transform:rotate(-40deg) scaleX(0.95)">26/05/2025</span>
<div style="position:absolute;left:811.685px;width:300px;text-align:center;top:576.50px;height:9px;line-height:9px;font-size:7px;white-space:nowrap;color:#6b6b6b;"><span id="t80" class="mono" style="display:inline-block;">0</span></div>
<span class="mono" style="position:absolute;right:485.7px;top:588.5px;font-size:7.2px;line-height:8px;color:#6b6b6b;white-space:nowrap;transform-origin:100% 50%;transform:rotate(-40deg) scaleX(0.95)">27/05/2025</span>
<div class="abs" style="left:984.5px;top:586.9px;width:24.2px;height:1.1px;background:#c5d2dc"></div>
<div style="position:absolute;left:846.5549999999998px;width:300px;text-align:center;top:575.38px;height:9px;line-height:9px;font-size:7px;white-space:nowrap;color:#6b6b6b;"><span id="t81" class="mono" style="display:inline-block;">2</span></div>
<span class="mono" style="position:absolute;right:450.8px;top:588.5px;font-size:7.2px;line-height:8px;color:#6b6b6b;white-space:nowrap;transform-origin:100% 50%;transform:rotate(-40deg) scaleX(0.95)">28/05/2025</span>
<div class="abs" style="left:1019.3px;top:586.9px;width:24.2px;height:1.1px;background:#c5d2dc"></div>
<div style="position:absolute;left:881.425px;width:300px;text-align:center;top:575.38px;height:9px;line-height:9px;font-size:7px;white-space:nowrap;color:#6b6b6b;"><span id="t82" class="mono" style="display:inline-block;">2</span></div>
<span class="mono" style="position:absolute;right:416.0px;top:588.5px;font-size:7.2px;line-height:8px;color:#6b6b6b;white-space:nowrap;transform-origin:100% 50%;transform:rotate(-40deg) scaleX(0.95)">29/05/2025</span>
<div class="abs" style="left:1054.2px;top:586.9px;width:24.2px;height:1.1px;background:#c5d2dc"></div>
<div style="position:absolute;left:916.2949999999998px;width:300px;text-align:center;top:575.38px;height:9px;line-height:9px;font-size:7px;white-space:nowrap;color:#6b6b6b;"><span id="t83" class="mono" style="display:inline-block;">2</span></div>
<span class="mono" style="position:absolute;right:381.1px;top:588.5px;font-size:7.2px;line-height:8px;color:#6b6b6b;white-space:nowrap;transform-origin:100% 50%;transform:rotate(-40deg) scaleX(0.95)">30/05/2025</span>
<div style="position:absolute;left:951.165px;width:300px;text-align:center;top:576.50px;height:9px;line-height:9px;font-size:7px;white-space:nowrap;color:#6b6b6b;"><span id="t84" class="mono" style="display:inline-block;">0</span></div>
<span class="mono" style="position:absolute;right:346.2px;top:588.5px;font-size:7.2px;line-height:8px;color:#6b6b6b;white-space:nowrap;transform-origin:100% 50%;transform:rotate(-40deg) scaleX(0.95)">31/05/2025</span>
<div style="position:absolute;left:986.0349999999999px;width:300px;text-align:center;top:576.50px;height:9px;line-height:9px;font-size:7px;white-space:nowrap;color:#6b6b6b;"><span id="t85" class="mono" style="display:inline-block;">0</span></div>
<span class="mono" style="position:absolute;right:311.4px;top:588.5px;font-size:7.2px;line-height:8px;color:#6b6b6b;white-space:nowrap;transform-origin:100% 50%;transform:rotate(-40deg) scaleX(0.95)">01/06/2025</span>
<div style="position:absolute;left:1020.905px;width:300px;text-align:center;top:576.50px;height:9px;line-height:9px;font-size:7px;white-space:nowrap;color:#6b6b6b;"><span id="t86" class="mono" style="display:inline-block;">0</span></div>
<span class="mono" style="position:absolute;right:276.5px;top:588.5px;font-size:7.2px;line-height:8px;color:#6b6b6b;white-space:nowrap;transform-origin:100% 50%;transform:rotate(-40deg) scaleX(0.95)">02/06/2025</span>
<div style="position:absolute;left:1055.7749999999999px;width:300px;text-align:center;top:576.50px;height:9px;line-height:9px;font-size:7px;white-space:nowrap;color:#6b6b6b;"><span id="t87" class="mono" style="display:inline-block;">0</span></div>
<span class="mono" style="position:absolute;right:241.6px;top:588.5px;font-size:7.2px;line-height:8px;color:#6b6b6b;white-space:nowrap;transform-origin:100% 50%;transform:rotate(-40deg) scaleX(0.95)">03/06/2025</span>
<div class="abs" style="left:1228.5px;top:570.7px;width:24.2px;height:17.3px;background:#c5d2dc"></div>
<div style="position:absolute;left:1090.645px;width:300px;text-align:center;top:559.17px;height:9px;line-height:9px;font-size:7px;white-space:nowrap;color:#6b6b6b;"><span id="t88" class="mono" style="display:inline-block;">31</span></div>
<span class="mono" style="position:absolute;right:206.8px;top:588.5px;font-size:7.2px;line-height:8px;color:#6b6b6b;white-space:nowrap;transform-origin:100% 50%;transform:rotate(-40deg) scaleX(0.95)">04/06/2025</span>
<div class="abs" style="left:1263.4px;top:418.1px;width:24.2px;height:169.9px;background:#c5d2dc"></div>
<div style="position:absolute;left:1125.5149999999999px;width:300px;text-align:center;top:406.56px;height:9px;line-height:9px;font-size:7px;white-space:nowrap;color:#6b6b6b;"><span id="t89" class="mono" style="display:inline-block;">304</span></div>
<span class="mono" style="position:absolute;right:171.9px;top:588.5px;font-size:7.2px;line-height:8px;color:#6b6b6b;white-space:nowrap;transform-origin:100% 50%;transform:rotate(-40deg) scaleX(0.95)">05/06/2025</span>
<div class="abs" style="left:1298.3px;top:521.5px;width:24.2px;height:66.5px;background:#c5d2dc"></div>
<div style="position:absolute;left:1160.385px;width:300px;text-align:center;top:509.98px;height:9px;line-height:9px;font-size:7px;white-space:nowrap;color:#6b6b6b;"><span id="t90" class="mono" style="display:inline-block;">119</span></div>
<span class="mono" style="position:absolute;right:137.0px;top:588.5px;font-size:7.2px;line-height:8px;color:#6b6b6b;white-space:nowrap;transform-origin:100% 50%;transform:rotate(-40deg) scaleX(0.95)">06/06/2025</span>
<div style="position:absolute;left:1195.2549999999999px;width:300px;text-align:center;top:576.50px;height:9px;line-height:9px;font-size:7px;white-space:nowrap;color:#6b6b6b;"><span id="t91" class="mono" style="display:inline-block;">0</span></div>
<span class="mono" style="position:absolute;right:102.1px;top:588.5px;font-size:7.2px;line-height:8px;color:#6b6b6b;white-space:nowrap;transform-origin:100% 50%;transform:rotate(-40deg) scaleX(0.95)">07/06/2025</span>
<div style="position:absolute;left:1230.125px;width:300px;text-align:center;top:576.50px;height:9px;line-height:9px;font-size:7px;white-space:nowrap;color:#6b6b6b;"><span id="t92" class="mono" style="display:inline-block;">0</span></div>
<span class="mono" style="position:absolute;right:67.3px;top:588.5px;font-size:7.2px;line-height:8px;color:#6b6b6b;white-space:nowrap;transform-origin:100% 50%;transform:rotate(-40deg) scaleX(0.95)">08/06/2025</span>
<span style="position:absolute;left:395.3px;top:472px;width:40px;text-align:center;font-size:7px;line-height:8px;color:#333;white-space:nowrap;letter-spacing:0.2px;transform:rotate(-90deg)"># of Pmt</span>
<span id="t93" style="position:absolute;display:inline-block;left:893.6px;top:637.10px;height:9px;line-height:9px;font-size:6.8px;white-space:nowrap;transform:scaleX(1.0307);transform-origin:left center;color:#333;-webkit-text-stroke:0.15px #333;">Date</span>
<svg style="left:914.8px;top:639.8px" width="5.4" height="4.2" viewBox="0 0 5 4"><path d="M0.2 0.3 H4.8 L2.5 3.6 Z" fill="#737373"/></svg>
<div class="abs" style="left:1390px;top:364px;width:7px;height:223px;background:linear-gradient(90deg,rgba(255,255,255,0),rgba(247,247,247,.95))"></div>
<div class="abs" style="left:1364px;top:641px;width:60px;height:9px;background:#fdfbea;overflow:hidden"><span style="position:absolute;left:4px;top:6.5px;font-size:7px;line-height:8px;color:#444a6a;white-space:nowrap">Widget</span></div>
</body></html>
